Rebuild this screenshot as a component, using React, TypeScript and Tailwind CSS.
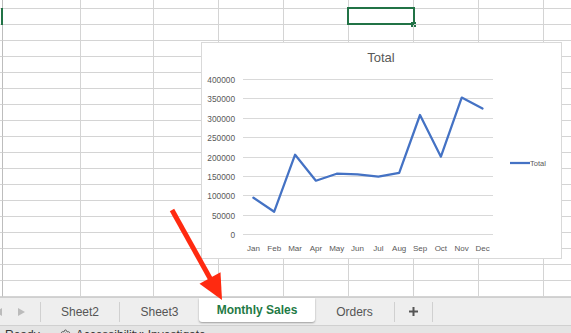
import React from "react";
import { Settings } from "lucide-react";

const colClasses = [
  "w-[78px]",
  "w-[73px]",
  "w-[65px]",
  "w-[65px]",
  "w-[65px]",
  "w-[65px]",
  "w-[65px]",
  "w-[65px]",
  "w-[65px]",
];

const months = ["Jan", "Feb", "Mar", "Apr", "May", "Jun", "Jul", "Aug", "Sep", "Oct", "Nov", "Dec"];
const values = [93700, 57500, 204700, 137500, 155600, 154000, 148000, 158000, 307000, 199500, 352000, 324000];
const ticks = [400000, 350000, 300000, 250000, 200000, 150000, 100000, 50000, 0];

const yOf = (v: number) => 191 - (v * 155) / 400000;
const xOf = (i: number) => 51.4 + 20.83 * i;

function Chart() {
  const pts = values.map((v, i) => `${xOf(i).toFixed(1)},${yOf(v).toFixed(1)}`).join(" ");
  return (
    <div className="absolute left-[201px] top-[42px] w-[361px] h-[217px] border border-[#d9d9d9] bg-white">
      <svg width="359" height="215" viewBox="0 0 359 215" style={{ fontFamily: "'Liberation Sans', Arial, sans-serif" }}>
        <text x="179" y="18.5" textAnchor="middle" fontSize="13" fill="#595959">
          Total
        </text>
        {ticks.map((t) => {
          const y = Math.round(yOf(t)) + 0.5;
          return (
            <g key={t}>
              <line x1="41" x2="291" y1={y} y2={y} stroke="#d9d9d9" strokeWidth="1" />
              <text x="33" y={y + 3} textAnchor="end" fontSize="8.3" fill="#595959">
                {t}
              </text>
            </g>
          );
        })}
        {months.map((m, i) => (
          <text key={m} x={xOf(i)} y="208" textAnchor="middle" fontSize="8" fill="#595959">
            {m}
          </text>
        ))}
        <polyline points={pts} fill="none" stroke="#4472c4" strokeWidth="2.25" strokeLinejoin="round" strokeLinecap="round" />
        <line x1="308" x2="328" y1="120" y2="120" stroke="#4472c4" strokeWidth="2.25" />
        <text x="328" y="122.7" fontSize="7.5" fill="#595959">
          Total
        </text>
      </svg>
    </div>
  );
}

function Grid() {
  const rows = Array.from({ length: 19 }, (_, i) => i);
  return (
    <div className="flex flex-col">
      {rows.map((r) => (
        <div key={r} className={`flex ${r === 0 ? "h-[9px]" : "h-[16px]"}`}>
          <div className="relative w-[3px] shrink-0 border-r border-b border-r-[#bdbdbd] border-b-[#d4d4d4]">
            {r === 1 && <div className="absolute left-px -top-px w-[2px] h-[17px] bg-[#217346]" />}
          </div>
          {colClasses.map((c, ci) => (
            <div key={ci} className={`relative shrink-0 border-r border-b border-[#d4d4d4] ${c}`}>
              {r === 1 && ci === 5 && (
                <>
                  <div className="absolute -left-[2px] -top-[2px] w-[68px] h-[18px] border-2 border-[#217346]" />
                  <div className="absolute left-[62px] top-[13px] w-[5px] h-[5px] bg-[#217346]" />
                </>
              )}
            </div>
          ))}
        </div>
      ))}
    </div>
  );
}

function Sep() {
  return <div className="w-px h-[20px] bg-[#d0d0d0] shrink-0" />;
}

function TabBar() {
  return (
    <div className="flex items-center h-[28px] bg-[#eeeeee] border-t border-[#cfcfcf] text-[12px] text-[#555555]">
      <div className="flex items-center w-[40px] shrink-0">
        <svg width="7" height="8" viewBox="0 0 7 8" className="-ml-[5px]">
          <polygon points="7,0 7,8 0,4" fill="#bbbbbb" />
        </svg>
        <svg width="7" height="8" viewBox="0 0 7 8" className="ml-[16px]">
          <polygon points="0,0 0,8 7,4" fill="#bbbbbb" />
        </svg>
      </div>
      <Sep />
      <div className="w-[78px] shrink-0 text-center">Sheet2</div>
      <Sep />
      <div className="w-[79px] shrink-0 text-center">Sheet3</div>
      <div className="w-[116px] h-[24px] -mt-[4px] shrink-0 flex items-center justify-center bg-white rounded-b-[3px] shadow-[0_1px_2px_rgba(0,0,0,0.35)] font-bold text-[#1f7a45]">
        Monthly Sales
      </div>
      <div className="w-[79px] shrink-0 text-center">Orders</div>
      <Sep />
      <div className="w-[37px] shrink-0 flex items-center justify-center">
        <svg width="9" height="9" viewBox="0 0 9 9">
          <rect x="3.5" y="0" width="2" height="9" fill="#555555" />
          <rect x="0" y="3.5" width="9" height="2" fill="#555555" />
        </svg>
      </div>
      <Sep />
    </div>
  );
}

function StatusBar() {
  return (
    <div className="flex items-start h-[12px] bg-[#e4e4e4] border-t border-[#d0d0d0] pt-[2px] pl-[5px] text-[12px] leading-[14px] text-[#333333]">
      <span>Ready</span>
      <Settings size={11} className="ml-[20px] mt-[1px] text-[#555555]" />
      <span className="ml-[5px]">Accessibility: Investigate</span>
    </div>
  );
}

export default function App() {
  return (
    <div
      className="relative w-[571px] h-[333px] overflow-hidden bg-white"
      style={{ fontFamily: "'Liberation Sans', Arial, sans-serif" }}
    >
      <Grid />
      <TabBar />
      <StatusBar />
      <Chart />
      <svg className="absolute left-0 top-0 pointer-events-none" width="571" height="333" viewBox="0 0 571 333">
        <line x1="172" y1="210" x2="211" y2="280" stroke="#ff2a10" strokeWidth="5" />
        <polygon points="199.5,283.8 220.5,272.2 222,300" fill="#ff2a10" />
      </svg>
    </div>
  );
}
